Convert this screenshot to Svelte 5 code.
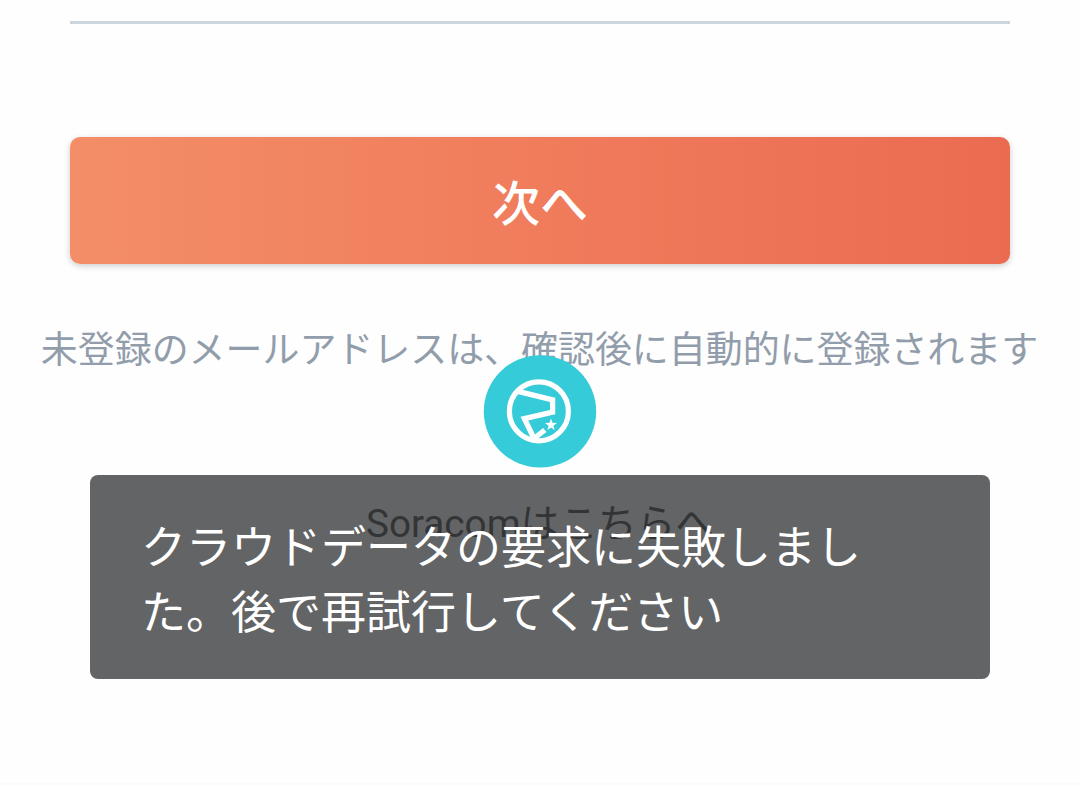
<script lang="ts">
  const toastLines = ['クラウドデータの要求に失敗しまし', 'た。後で再試行してください'];
</script>

<main class="login">
  <div class="field-line"></div>
  <button class="next" type="button">次へ</button>
  <p class="hint">未登録のメールアドレスは、確認後に自動的に登録されます</p>
  <a class="region-link" href="#soracom">Soracomはこちらへ</a>

  <div class="toast-wrap">
    <svg class="badge" viewBox="0 0 114 114" aria-hidden="true">
      <circle cx="57" cy="57.4" r="56.2" fill="#35cbd8" />
      <g fill="none" stroke="#fff">
        <circle cx="55.9" cy="57.3" r="29.5" stroke-width="5.2" />
        <path d="M34 37.2L69.6 45.8V58.2L41.4 64.6L51 84.5L61.8 76" stroke-width="5.3" />
      </g>
      <path d="M68 64.5L69.5 68.8L74 68.9L70.4 71.7L71.7 76L68 73.4L64.3 76L65.6 71.7L62 68.9L66.5 68.8Z" fill="#fff" />
    </svg>
    <div class="toast" role="alert">
      {#each toastLines as line}
        <div>{line}</div>
      {/each}
    </div>
  </div>
</main>

<style>
  :global(body) {
    margin: 0;
    background: #fefefe;
  }
  .login {
    position: relative;
    box-sizing: border-box;
    height: 785px;
    padding: 21px 70px 0;
    display: flex;
    flex-direction: column;
    align-items: center;
    overflow: hidden;
    border-bottom: 2px solid #fbfbfb;
    font-family: Roboto, 'Noto Sans CJK JP', sans-serif;
  }
  .field-line {
    width: 100%;
    height: 3px;
    flex-shrink: 0;
    background: #cdd6dd;
  }
  .next {
    width: 100%;
    height: 127px;
    flex-shrink: 0;
    margin-top: 113px;
    padding: 0;
    border: 0;
    border-radius: 10px;
    background: linear-gradient(90deg, #f38e68, #f07c5c 50%, #eb6b51);
    box-shadow: 0 2px 6px rgba(0, 0, 0, 0.2);
    color: #fff;
    font: 500 48px/127px 'Noto Sans CJK JP', sans-serif;
  }
  .hint {
    margin: 60px 0 0;
    padding-right: 1px;
    color: #929dab;
    font-size: 36.95px;
    line-height: 54px;
    white-space: nowrap;
  }
  .region-link {
    margin-top: 119px;
    color: #24272a;
    font-size: 38.7px;
    line-height: 54px;
    text-decoration: none;
    white-space: nowrap;
  }
  .toast-wrap {
    position: absolute;
    top: 354px;
    left: 90px;
    right: 90px;
    display: flex;
    flex-direction: column;
    align-items: center;
    gap: 7px;
  }
  .badge {
    width: 114px;
    height: 114px;
  }
  .toast {
    box-sizing: border-box;
    width: 100%;
    height: 204px;
    padding: 41px 51px;
    border-radius: 8px;
    background: rgba(55, 56, 58, 0.78);
    color: #fff;
    font-size: 45px;
    line-height: 65px;
    white-space: nowrap;
  }
</style>
